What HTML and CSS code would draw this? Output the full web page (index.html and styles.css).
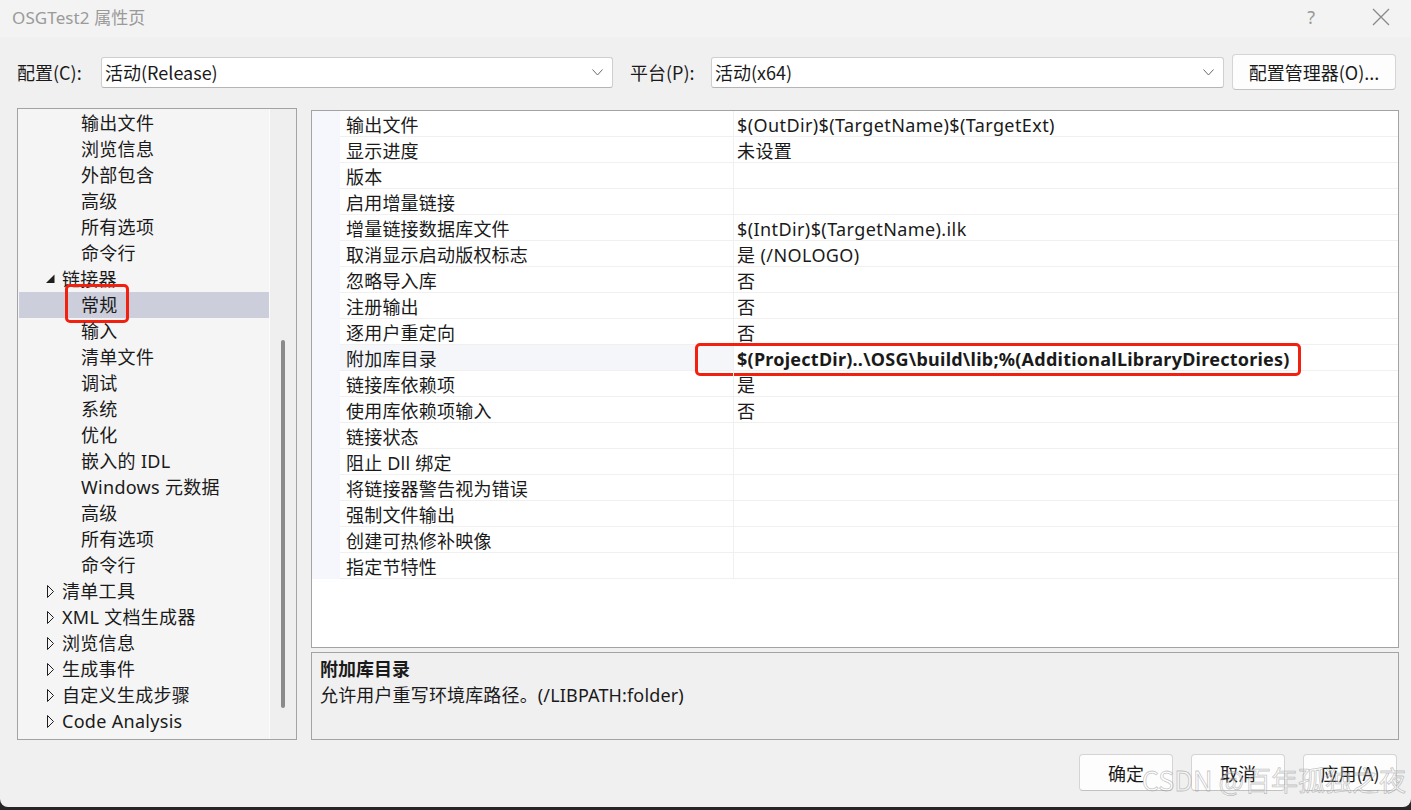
FILE: index.html
```html
<!DOCTYPE html>
<html lang="zh-CN">
<head>
<meta charset="utf-8">
<title>OSGTest2 属性页</title>
<link rel="stylesheet" href="styles.css">
</head>
<body>
<div class="window">
  <div class="titlebar">
    <span class="title">OSGTest2 属性页</span>
    <span class="tb-actions">
      <span class="help">?</span>
      <svg class="close" width="18" height="18" viewBox="0 0 18 18"><path d="M1 1 L17 17 M17 1 L1 17" stroke="#8a8a8a" stroke-width="1.3" fill="none"/></svg>
    </span>
  </div>

  <div class="config">
    <span class="lbl">配置(C):</span>
    <div class="combo combo-cfg"><span>活动(Release)</span><svg class="chev" width="11" height="7" viewBox="0 0 11 7"><path d="M0.5 0.5 L5.5 6 L10.5 0.5" stroke="#6a6a6a" stroke-width="1" fill="none"/></svg></div>
    <span class="lbl lbl-plat">平台(P):</span>
    <div class="combo combo-plat"><span>活动(x64)</span><svg class="chev" width="11" height="7" viewBox="0 0 11 7"><path d="M0.5 0.5 L5.5 6 L10.5 0.5" stroke="#6a6a6a" stroke-width="1" fill="none"/></svg></div>
    <button class="btn btn-mgr">配置管理器(O)...</button>
  </div>

  <div class="main">
    <div class="tree">
      <div class="tree-list">
        <div class="tr l2">输出文件</div>
        <div class="tr l2">浏览信息</div>
        <div class="tr l2">外部包含</div>
        <div class="tr l2">高级</div>
        <div class="tr l2">所有选项</div>
        <div class="tr l2">命令行</div>
        <div class="tr l1"><svg class="tri" width="16" height="26" viewBox="0 0 16 26"><path d="M0 17 L8.5 17 L8.5 8.5 Z" fill="#1e1e1e"/></svg>链接器</div>
        <div class="tr l2 sel">常规<span class="mark mark-tree"></span></div>
        <div class="tr l2">输入</div>
        <div class="tr l2">清单文件</div>
        <div class="tr l2">调试</div>
        <div class="tr l2">系统</div>
        <div class="tr l2">优化</div>
        <div class="tr l2">嵌入的 IDL</div>
        <div class="tr l2">Windows 元数据</div>
        <div class="tr l2">高级</div>
        <div class="tr l2">所有选项</div>
        <div class="tr l2">命令行</div>
        <div class="tr l1"><svg class="tri" width="16" height="26" viewBox="0 0 16 26"><path d="M1.5 7.5 L7.5 13.5 L1.5 19.5 Z" fill="none" stroke="#1e1e1e" stroke-width="1"/></svg>清单工具</div>
        <div class="tr l1"><svg class="tri" width="16" height="26" viewBox="0 0 16 26"><path d="M1.5 7.5 L7.5 13.5 L1.5 19.5 Z" fill="none" stroke="#1e1e1e" stroke-width="1"/></svg>XML 文档生成器</div>
        <div class="tr l1"><svg class="tri" width="16" height="26" viewBox="0 0 16 26"><path d="M1.5 7.5 L7.5 13.5 L1.5 19.5 Z" fill="none" stroke="#1e1e1e" stroke-width="1"/></svg>浏览信息</div>
        <div class="tr l1"><svg class="tri" width="16" height="26" viewBox="0 0 16 26"><path d="M1.5 7.5 L7.5 13.5 L1.5 19.5 Z" fill="none" stroke="#1e1e1e" stroke-width="1"/></svg>生成事件</div>
        <div class="tr l1"><svg class="tri" width="16" height="26" viewBox="0 0 16 26"><path d="M1.5 7.5 L7.5 13.5 L1.5 19.5 Z" fill="none" stroke="#1e1e1e" stroke-width="1"/></svg>自定义生成步骤</div>
        <div class="tr l1"><svg class="tri" width="16" height="26" viewBox="0 0 16 26"><path d="M1.5 7.5 L7.5 13.5 L1.5 19.5 Z" fill="none" stroke="#1e1e1e" stroke-width="1"/></svg>Code Analysis</div>
      </div>
      <div class="vscroll"><div class="thumb"></div></div>
    </div>

    <div class="right">
      <div class="grid">
        <div class="gr"><div class="gut"></div><div class="nm">输出文件</div><div class="vl">$(OutDir)$(TargetName)$(TargetExt)</div></div>
        <div class="gr"><div class="gut"></div><div class="nm">显示进度</div><div class="vl">未设置</div></div>
        <div class="gr"><div class="gut"></div><div class="nm">版本</div><div class="vl"></div></div>
        <div class="gr"><div class="gut"></div><div class="nm">启用增量链接</div><div class="vl"></div></div>
        <div class="gr"><div class="gut"></div><div class="nm">增量链接数据库文件</div><div class="vl">$(IntDir)$(TargetName).ilk</div></div>
        <div class="gr"><div class="gut"></div><div class="nm">取消显示启动版权标志</div><div class="vl">是 (/NOLOGO)</div></div>
        <div class="gr"><div class="gut"></div><div class="nm">忽略导入库</div><div class="vl">否</div></div>
        <div class="gr"><div class="gut"></div><div class="nm">注册输出</div><div class="vl">否</div></div>
        <div class="gr"><div class="gut"></div><div class="nm">逐用户重定向</div><div class="vl">否</div></div>
        <div class="gr cur"><div class="gut"></div><div class="nm">附加库目录</div><div class="vl bold">$(ProjectDir)..\OSG\build\lib;%(AdditionalLibraryDirectories)</div><span class="mark mark-grid"></span></div>
        <div class="gr"><div class="gut"></div><div class="nm">链接库依赖项</div><div class="vl">是</div></div>
        <div class="gr"><div class="gut"></div><div class="nm">使用库依赖项输入</div><div class="vl">否</div></div>
        <div class="gr"><div class="gut"></div><div class="nm">链接状态</div><div class="vl"></div></div>
        <div class="gr"><div class="gut"></div><div class="nm">阻止 Dll 绑定</div><div class="vl"></div></div>
        <div class="gr"><div class="gut"></div><div class="nm">将链接器警告视为错误</div><div class="vl"></div></div>
        <div class="gr"><div class="gut"></div><div class="nm">强制文件输出</div><div class="vl"></div></div>
        <div class="gr"><div class="gut"></div><div class="nm">创建可热修补映像</div><div class="vl"></div></div>
        <div class="gr"><div class="gut"></div><div class="nm">指定节特性</div><div class="vl"></div></div>
      </div>
      <div class="desc">
        <div class="desc-title">附加库目录</div>
        <div class="desc-text">允许用户重写环境库路径。(/LIBPATH:folder)</div>
      </div>
    </div>
  </div>

  <div class="footer">
    <button class="btn btn-foot">确定</button>
    <button class="btn btn-foot">取消</button>
    <button class="btn btn-foot">应用(A)</button>
    <span class="watermark">CSDN @百年孤独之夜</span>
  </div>
</div>
</body>
</html>
```

FILE: styles.css
```css
* { box-sizing: border-box; }
html, body { margin: 0; padding: 0; }
body {
  width: 1411px;
  height: 810px;
  overflow: hidden;
  background: #262626;
  font-family: "Noto Sans", "Noto Sans CJK SC", sans-serif;
  font-size: 18px;
  color: #1a1a1a;
}
.window {
  position: relative;
  width: 1411px;
  height: 807px;
  background: #f0f0f0;
  border-radius: 0 0 8px 8px;
  display: flex;
  flex-direction: column;
}
.titlebar {
  height: 37px;
  background: #f3f3f3;
  display: flex;
  align-items: center;
  justify-content: space-between;
  padding: 0 21px 4px 12px;
}
.title {
  font-size: 17px;
  color: #9a9a9a;
  letter-spacing: 0.1px;
}
.tb-actions {
  display: flex;
  align-items: center;
  gap: 57px;
}
.help {
  font-size: 18px;
  color: #9a9a9a;
}
.close { display: block; }

.config {
  display: flex;
  align-items: center;
  height: 36px;
  margin-top: 17px;
  padding-left: 17px;
}
.lbl {
  font-family: "Noto Sans CJK SC", sans-serif;
  font-size: 18px;
  width: 84px;
}
.lbl-plat { width: 81px; margin-left: 17px; }
.combo {
  height: 31px;
  background: #fff;
  border: 1px solid #cfcfcf;
  border-bottom-color: #b5b5b5;
  border-radius: 3px;
  display: flex;
  align-items: center;
  justify-content: space-between;
  padding: 0 9px 0 3px;
  font-family: "Noto Sans CJK SC", sans-serif;
  font-size: 18px;
}
.combo-cfg { width: 512px; }
.combo-plat { width: 513px; }
.chev { display: block; }
.btn {
  font-family: "Noto Sans CJK SC", sans-serif;
  background: #fdfdfd;
  border: 1px solid #d4d4d4;
  border-bottom-color: #c2c2c2;
  border-radius: 4px;
  color: #1a1a1a;
  padding: 0;
  cursor: default;
}
.btn-mgr {
  width: 164px;
  height: 36px;
  margin-left: 8px;
  font-size: 18px;
}

.main {
  display: flex;
  margin-top: 18px;
  padding-left: 17px;
  height: 632px;
}
.tree {
  width: 280px;
  height: 632px;
  border: 1px solid #a3a3a3;
  background: #f5f5f5;
  display: flex;
  overflow: hidden;
}
.tree-list {
  width: 251px;
  padding-top: 1px;
  padding-left: 1px;
  letter-spacing: 0.3px;
}
.tr {
  position: relative;
  height: 26px;
  line-height: 26px;
  white-space: nowrap;
  display: flex;
  align-items: center;
}
.tr.l2 { padding-left: 62px; }
.tr.l1 { padding-left: 27px; }
.tri { display: block; flex: none; margin-right: 0; }
.tr.sel { background: #cccedb; }
.vscroll {
  width: 27px;
  background: #efefef;
  border-left: 1px solid #fbfbfb;
  display: flex;
  justify-content: center;
  padding-top: 231px;
}
.thumb {
  width: 4px;
  height: 368px;
  border-radius: 2px;
  background: #8b8b8b;
}

.mark {
  position: absolute;
  border: 3px solid #f2210f;
  border-radius: 5px;
  pointer-events: none;
}
.mark-tree { left: 46px; top: -8px; width: 64px; height: 39px; }

.right {
  margin-left: 14px;
  margin-top: 2px;
  width: 1088px;
  display: flex;
  flex-direction: column;
  gap: 4px;
}
.grid {
  height: 538px;
  background: #fff;
  border: 1px solid #a3a3a3;
}
.gr {
  position: relative;
  display: grid;
  grid-template-columns: 28px 394px 1fr;
  height: 26px;
  white-space: nowrap;
}
.gut { background: #f5f7fc; }
.nm, .vl {
  padding-top: 1px;
  line-height: 26px;
  height: 26px;
  border-bottom: 1px solid #f0f0f0;
  overflow: visible;
}
.nm {
  padding-left: 6px;
  border-right: 1px solid #f0f0f0;
  letter-spacing: 0.2px;
}
.vl {
  padding-left: 3px;
  letter-spacing: 0.4px;
}
.gr.cur .nm { background: #f4f6fa; }
.vl.bold { font-weight: 700; letter-spacing: 0.24px; }
.mark-grid { left: 383px; top: -2px; width: 606px; height: 33px; }

.desc {
  height: 88px;
  background: #f0f0f0;
  border: 1px solid #a3a3a3;
  padding: 3px 8px 0 8px;
  line-height: 26px;
}
.desc-title { font-weight: 700; }
.desc-text { letter-spacing: 0.15px; }

.footer {
  position: relative;
  display: flex;
  justify-content: flex-end;
  gap: 18px;
  margin-top: 14px;
  padding-right: 14px;
}
.btn-foot {
  width: 94px;
  height: 37px;
  font-size: 18px;
}
.watermark {
  position: absolute;
  right: 5px;
  top: 6px;
  font-family: "Noto Sans CJK SC", sans-serif;
  font-size: 27px;
  color: rgba(255, 255, 255, 0.3);
  -webkit-text-stroke: 0.8px rgba(130, 130, 130, 0.45);
  pointer-events: none;
  white-space: nowrap;
}
```
